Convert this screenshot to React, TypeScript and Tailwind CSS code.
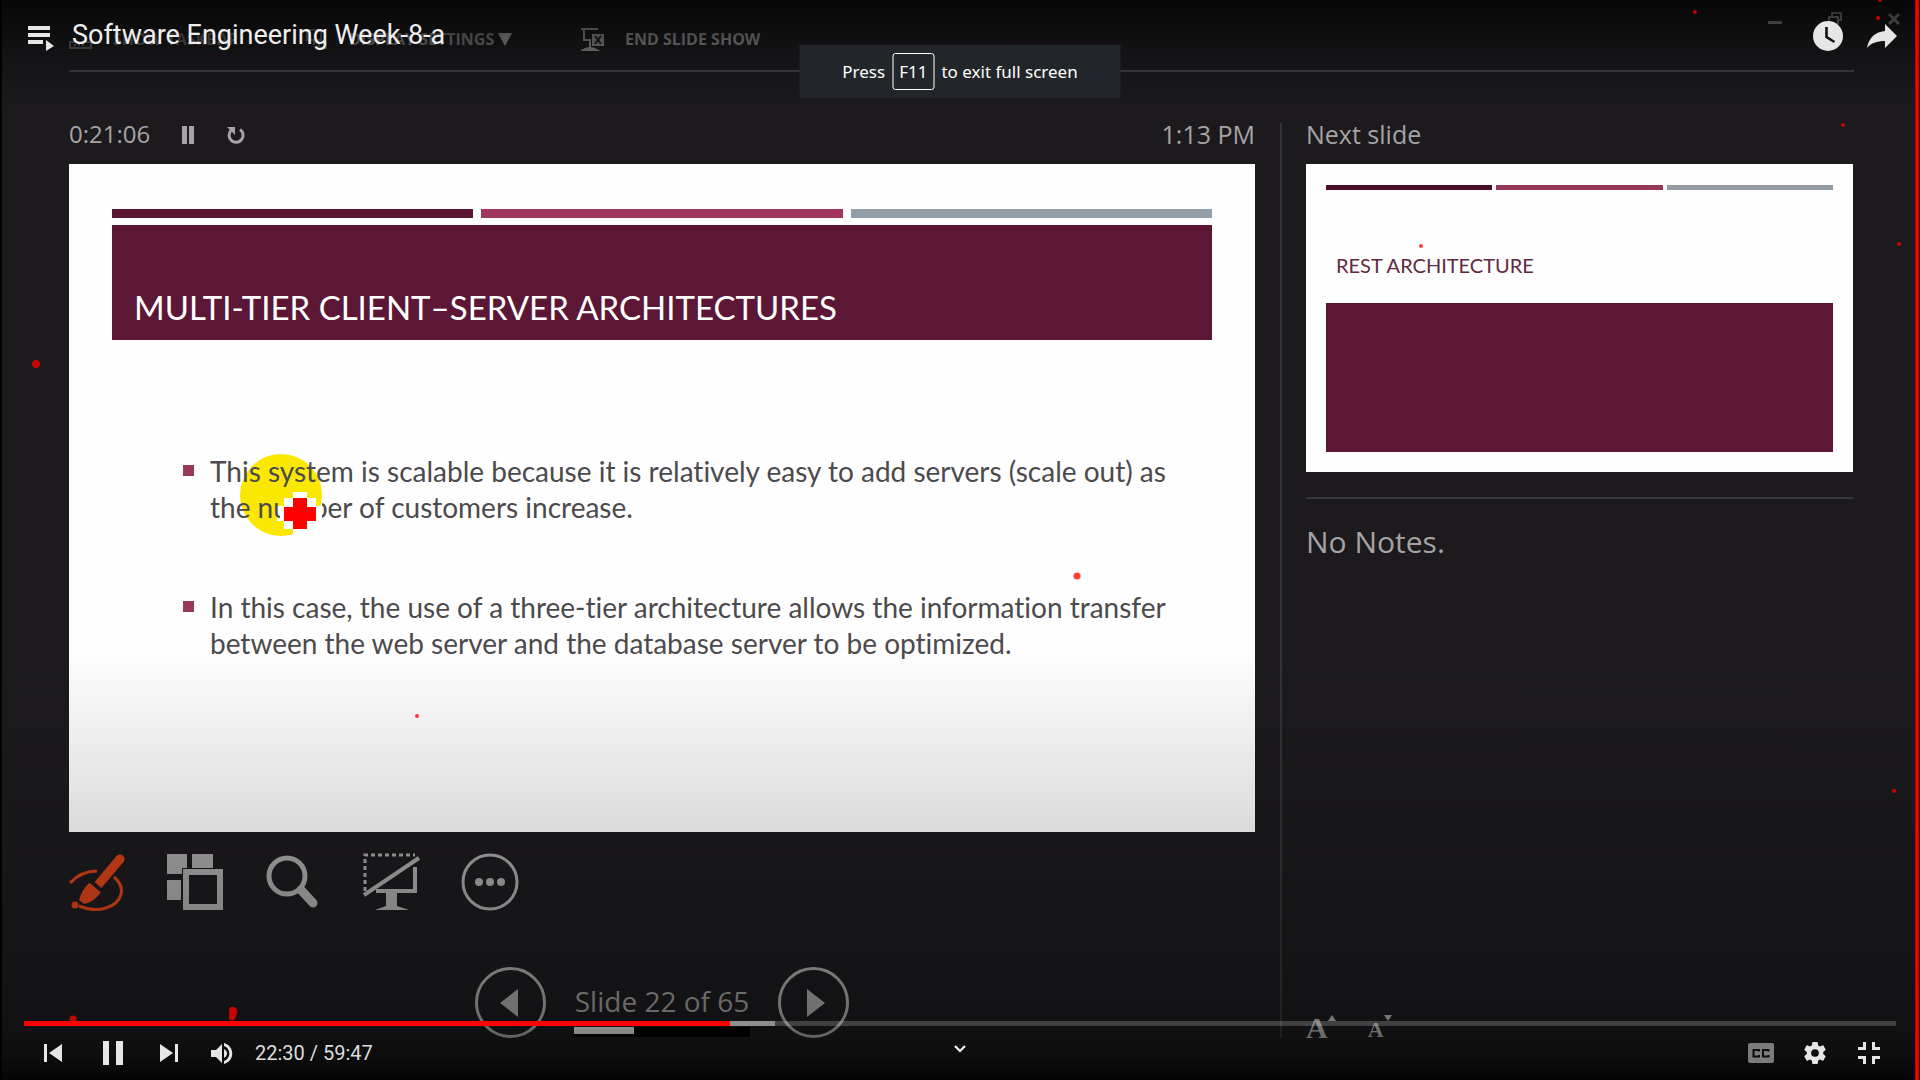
import type { ReactNode } from "react";

const inkDots = [
  { x: 1695, y: 12, r: 2 },
  { x: 1880, y: 0, r: 2 },
  { x: 1878, y: 18, r: 2 },
  { x: 1843, y: 125, r: 2 },
  { x: 1421, y: 246, r: 2 },
  { x: 1899, y: 244, r: 2 },
  { x: 36, y: 364, r: 4 },
  { x: 1077, y: 576, r: 3.5 },
  { x: 417, y: 716, r: 2 },
  { x: 1894, y: 791, r: 2 },
  { x: 73, y: 1019, r: 3.5 },
];

function IconButton({ label, className = "", children }: { label: string; className?: string; children: ReactNode }) {
  return (
    <button type="button" aria-label={label} className={`flex shrink-0 items-center justify-center ${className}`}>
      {children}
    </button>
  );
}

function PresenterHeader() {
  return (
    <header className="flex h-[70px] items-start pt-[27px] pr-5 pl-[69px] font-['Open_Sans',sans-serif] text-[16px] leading-6 font-bold text-[#8f8f8f]">
      <button type="button" className="flex w-[236px] shrink-0 items-center gap-5 text-[#5c5c5c]">
        <svg viewBox="0 0 24 22" className="h-[22px] w-6" fill="none" stroke="currentColor" strokeWidth="2">
          <path d="M1 14h21v6H1zM5 17h2M9 17h2M13 17h2" />
        </svg>
        SHOW TASKBAR
      </button>
      <button type="button" className="flex w-[276px] shrink-0 items-center gap-5 whitespace-nowrap text-[#7c7c7c]">
        <svg viewBox="0 0 24 24" className="size-6" fill="none" stroke="#5c5c5c" strokeWidth="2">
          <path d="M2 3h14v10H2zM9 13v5M14 16h7v5h-7z" />
        </svg>
        <span className="flex items-center gap-1">
          DISPLAY SETTINGS
          <svg viewBox="0 0 14 13" className="h-[13px] w-[14px]" fill="#989898">
            <path d="M0 0h14L7 13z" />
          </svg>
        </span>
      </button>
      <button type="button" className="flex items-center gap-5 whitespace-nowrap">
        <svg viewBox="0 0 24 24" className="size-6" fill="none" stroke="currentColor" strokeWidth="2">
          <path d="M0 2h17M3 2v11h7M9 13v8" />
          <path d="M2 23q7-4 14 0z" fill="currentColor" />
          <path d="M11 7h12v12H11z" fill="currentColor" stroke="none" />
          <path d="M14 9l6 8M20 9l-6 8" stroke="#1c1a1d" />
        </svg>
        END SLIDE SHOW
      </button>
      <div className="-mt-4 ml-auto flex items-center gap-[46px] text-[#8c8c8c]">
        <IconButton label="Minimize">
          <svg viewBox="0 0 14 16" className="h-4 w-[14px]" fill="currentColor">
            <path d="M0 10h14v3H0z" />
          </svg>
        </IconButton>
        <IconButton label="Restore">
          <svg viewBox="0 0 14 16" className="h-4 w-[14px]" fill="none" stroke="currentColor" strokeWidth="2">
            <path d="M4 5V2h9v7h-3M1 6h9v7H1z" />
          </svg>
        </IconButton>
        <IconButton label="Close">
          <svg viewBox="0 0 12 16" className="h-4 w-3" stroke="currentColor" strokeWidth="3">
            <path d="M1 3l10 10M11 3L1 13" />
          </svg>
        </IconButton>
      </div>
    </header>
  );
}

function Pointer() {
  return (
    <svg viewBox="0 0 90 90" className="absolute top-[289px] left-[171px] size-[90px]" aria-hidden="true">
      <circle cx="41" cy="42" r="41" fill="#fbe800" />
      <path d="M53 39h14v6h9v8h6v15h-6v8h-9v9H53v-9h-9v-8h-7V53h7v-8h9z" fill="#fff" />
      <path d="M53 45h14v9h9v14h-9v8H53v-8h-9V54h9z" fill="#f00" />
    </svg>
  );
}

function CurrentSlide() {
  return (
    <section className="relative aspect-[1186/668] bg-[#fefefe] px-[43px] pt-[45px]">
      <div className="grid h-[9px] grid-cols-3 gap-2">
        <div className="bg-[#5b1735]" />
        <div className="bg-[#a1375f]" />
        <div className="bg-[#929ea8]" />
      </div>
      <div className="mt-[7px] flex h-[115px] items-end bg-[#5b1735] px-[22px] pb-[11px]">
        <h1 className="font-['Lato',sans-serif] text-[33px] leading-[44px] whitespace-nowrap text-white">
          MULTI-TIER CLIENT–SERVER ARCHITECTURES
        </h1>
      </div>
      <Pointer />
      <ul className="relative mt-[113px] flex flex-col gap-16 pl-[71px] font-['Lato',sans-serif] text-[28px] leading-9 whitespace-nowrap text-[#4c4a4d] [font-variant-ligatures:none]">
        <li className="flex gap-4">
          <span className="mt-3 size-[11px] shrink-0 bg-[#96385a]" />
          <p className="[clip-path:polygon(0_0,100%_0,100%_100%,112px_100%,112px_44px,70px_44px,70px_100%,0_100%)]">
            This system is scalable because it is relatively easy to add servers (scale out) as
            <br />
            the number of customers increase.
          </p>
        </li>
        <li className="flex gap-4">
          <span className="mt-3 size-[11px] shrink-0 bg-[#96385a]" />
          <p>
            In this case, the use of a three-tier architecture allows the information transfer
            <br />
            between the web server and the database server to be optimized.
          </p>
        </li>
      </ul>
    </section>
  );
}

function SlideTools() {
  return (
    <div className="mt-[21px] flex gap-[41px] text-[#a9a7a9]">
      <IconButton label="Pen and laser pointer tools">
        <svg viewBox="0 0 57 58" className="h-[58px] w-[57px]" fill="none" stroke="#d8421a" strokeWidth="3">
          <path d="M1 30Q12 18 28 18M45 24C58 35 53 50 37 55Q24 59 10 53" />
          <path d="M29 32L51 6" strokeWidth="9" />
          <circle cx="51" cy="6" r="4.500" fill="#d8421a" stroke="none" />
          <path d="M21 29l11 10c-5 7-9 10-17 12l-5-4c3-9 5-12 11-18z" fill="#d8421a" stroke="none" />
          <path d="M20 28l13 11" stroke="#1c1a1d" strokeWidth="2" />
          <circle cx="6" cy="52" r="3.500" fill="#d8421a" stroke="none" />
        </svg>
      </IconButton>
      <IconButton label="See all slides">
        <svg viewBox="0 0 56 58" className="h-[58px] w-14" fill="currentColor">
          <path d="M0 1h20v20H0zM25 1h21v14H25zM0 27h14v20H0z" />
          <path d="M15 15h42v43H15z" fill="#1c1a1d" />
          <path fillRule="evenodd" d="M16 16h40v41H16zM22 22v29h28V22z" />
        </svg>
      </IconButton>
      <IconButton label="Zoom into the slide">
        <svg viewBox="0 0 58 58" className="size-[58px]" fill="none" stroke="currentColor">
          <circle cx="23" cy="23" r="18" strokeWidth="5" />
          <path d="M37 37l12 13" strokeWidth="9" strokeLinecap="round" />
        </svg>
      </IconButton>
      <IconButton label="Black or unblack slide show">
        <svg viewBox="0 0 57 58" className="h-[58px] w-[57px]" fill="none" stroke="currentColor" strokeWidth="3">
          <path d="M2 38V2h50" strokeDasharray="4 3" />
          <path d="M1 42L56 5M52 14v24H13" strokeWidth="4" />
          <path d="M23 38h11v15l12 4H12l11-4z" fill="currentColor" stroke="none" />
        </svg>
      </IconButton>
      <IconButton label="More slide show options">
        <svg viewBox="0 0 58 58" className="size-[58px]" fill="none" stroke="currentColor" strokeWidth="3">
          <circle cx="29" cy="29" r="27" />
          <g fill="currentColor" stroke="none">
            <circle cx="18" cy="29" r="4" />
            <circle cx="29" cy="29" r="4" />
            <circle cx="40" cy="29" r="4" />
          </g>
        </svg>
      </IconButton>
    </div>
  );
}

function SlideNavigation() {
  return (
    <nav className="mt-14 flex items-start justify-center gap-7 text-[#a8a8a8]">
      <IconButton label="Previous slide" className="size-[71px] rounded-full border-[3px] border-current">
        <svg viewBox="0 0 18 28" className="mr-1 h-7 w-[18px]" fill="currentColor">
          <path d="M18 0v28L0 14z" />
        </svg>
      </IconButton>
      <div className="flex w-[176px] flex-col items-center">
        <p className="mt-4 text-[28px] leading-9 whitespace-nowrap text-[#9c9c9c]">Slide 22 of 65</p>
        <div className="mt-2 h-[10px] w-full bg-black">
          <div className="h-[7px] w-[34%] bg-[#e0e0e0]" />
        </div>
      </div>
      <IconButton label="Next slide" className="size-[71px] rounded-full border-[3px] border-current">
        <svg viewBox="0 0 18 28" className="ml-1 h-7 w-[18px]" fill="currentColor">
          <path d="M0 0v28l18-14z" />
        </svg>
      </IconButton>
    </nav>
  );
}

function NextSlidePanel() {
  return (
    <aside className="flex flex-col border-l-2 border-[#333234] pl-6">
      <h2 className="h-[41px] text-[25px] leading-[22px]">Next slide</h2>
      <div className="flex aspect-[547/308] flex-col bg-[#fefefe] px-5 pt-[21px] pb-5">
        <div className="grid h-[5px] shrink-0 grid-cols-3 gap-1">
          <div className="bg-[#4a0e28]" />
          <div className="bg-[#96385a]" />
          <div className="bg-[#959ba3]" />
        </div>
        <p className="mt-[59px] pl-[10px] font-['Lato',sans-serif] text-[20px] leading-8 whitespace-nowrap text-[#5f2a40]">
          REST ARCHITECTURE
        </p>
        <div className="mt-[22px] flex-1 bg-[#5b1735]" />
      </div>
      <div className="mt-[25px] h-[2px] bg-[#38373a]" />
      <p className="mt-[25px] text-[30px] leading-9">No Notes.</p>
      <div className="mt-auto flex items-end gap-8 text-[#b4b4b4]">
        <button type="button" aria-label="Make the text larger" className="flex h-7 items-start font-['Liberation_Serif',serif] text-[30px] leading-9 font-bold">
          A
          <svg viewBox="0 0 8 6" className="mt-[5px] h-[6px] w-2" fill="currentColor">
            <path d="M0 6h8L4 0z" />
          </svg>
        </button>
        <button type="button" aria-label="Make the text smaller" className="flex h-7 items-start font-['Liberation_Serif',serif] text-[22px] leading-10 font-bold">
          A
          <svg viewBox="0 0 8 6" className="mt-[5px] h-[6px] w-2" fill="currentColor">
            <path d="M0 0h8L4 6z" />
          </svg>
        </button>
      </div>
    </aside>
  );
}

function PresenterView() {
  return (
    <div className="flex min-h-screen flex-col pb-[42px] font-['Open_Sans',sans-serif] text-[#a5a3a6]">
      <PresenterHeader />
      <div className="mr-[66px] ml-[69px] h-[2px] bg-[#424144]" />
      <main className="mt-[51px] mr-[67px] ml-[69px] grid flex-1 grid-cols-[1186fr_573fr] gap-x-[25px]">
        <div className="flex min-w-0 flex-col">
          <div className="flex h-[41px] items-start text-[25px] leading-[22px]">
            <time className="text-[24px]">0:21:06</time>
            <IconButton label="Pause the timer" className="ml-8 h-6">
              <svg viewBox="0 0 12 20" className="h-5 w-3" fill="currentColor">
                <path d="M0 1h5v18H0zM7 1h5v18H7z" />
              </svg>
            </IconButton>
            <IconButton label="Restart the timer" className="ml-[32px] h-6">
              <svg viewBox="0 0 20 20" className="size-5" fill="none" stroke="currentColor" strokeWidth="3">
                <path d="M14 4.500a7 7 0 1 1-9 1" />
                <path d="M1 2h8v8z" fill="currentColor" stroke="none" />
              </svg>
            </IconButton>
            <time className="ml-auto">1:13 PM</time>
          </div>
          <CurrentSlide />
          <SlideTools />
          <SlideNavigation />
        </div>
        <NextSlidePanel />
      </main>
    </div>
  );
}

function InkMarks() {
  return (
    <svg viewBox="0 0 1920 1080" className="pointer-events-none absolute inset-0 size-full" aria-hidden="true">
      <g fill="#ff0000" fillOpacity="0.76">
        {inkDots.map((d) => (
          <circle key={`${d.x}-${d.y}`} cx={d.x} cy={d.y} r={d.r} />
        ))}
        <path d="M229 1010q1-4 5-3 4 1 3 6l-2 6q-3 3-6 0z" />
      </g>
      <path d="M1915 0h4v1080h-4z" fill="#c00000" />
      <path d="M1916 0h2v1080h-2z" fill="#ff0000" />
    </svg>
  );
}

function FullscreenHint() {
  return (
    <div className="absolute top-[45px] left-1/2 flex h-[53px] w-[321px] -translate-x-1/2 items-center justify-center gap-[7px] bg-[#22262b] font-['Noto_Sans',sans-serif] text-[17px] whitespace-nowrap text-white">
      <span>Press</span>
      <kbd className="flex h-[37px] items-center rounded-[3px] border border-white px-[6px] font-['Noto_Sans',sans-serif]">F11</kbd>
      <span>to exit full screen</span>
    </div>
  );
}

function PlayerTop() {
  return (
    <div className="absolute inset-x-0 top-0 flex h-[72px] items-center pr-[23px] pl-7 text-[#eeeeee]">
      <IconButton label="Playlist">
        <svg viewBox="0 0 26 26" className="mt-1 size-[26px]" fill="#e6e6e6">
          <path d="M0 1h22v4H0zM0 8h22v4H0zM0 15h15v4H0zM18 15v11l8-5z" />
        </svg>
      </IconButton>
      <a href="#video" className="mb-[2px] ml-[18px] font-['Roboto',sans-serif] text-[27px] leading-8 whitespace-nowrap">
        Software Engineering Week-8-a
      </a>
      <div className="ml-auto flex items-center gap-6">
        <IconButton label="Watch later">
          <svg viewBox="0 0 30 30" className="size-[30px]" fill="#e6e6e6">
            <circle cx="15" cy="15" r="15" />
            <path d="M13.500 6v10l8 5" fill="none" stroke="#111" strokeWidth="2.600" />
          </svg>
        </IconButton>
        <IconButton label="Share">
          <svg viewBox="0 0 30 24" className="h-6 w-[30px]" fill="#e6e6e6">
            <path d="M18 0l12 12-12 12v-7C10 17 4 19 0 24 1.500 15 7 8 18 7z" />
          </svg>
        </IconButton>
      </div>
    </div>
  );
}

function PlayerBottom() {
  return (
    <div className="absolute inset-x-0 bottom-0 px-6 text-[#e6e6e6]">
      <input
        type="range"
        aria-label="Seek"
        min={0}
        max={3587}
        defaultValue={1350}
        className="block h-[5px] w-full appearance-none bg-[linear-gradient(to_right,#ff0000_37.7%,#8e8e8e_37.7%,#8e8e8e_40.1%,rgba(255,255,255,0.2)_40.1%)] [&::-webkit-slider-thumb]:size-0 [&::-webkit-slider-thumb]:appearance-none"
      />
      <div className="grid h-[54px] grid-cols-[1fr_auto_1fr] items-center">
        <div className="flex items-center pl-5">
          <IconButton label="Previous video">
            <svg viewBox="0 0 18 18" className="size-[18px]" fill="currentColor">
              <path d="M0 0h3v18H0zM18 0v18L5 9z" />
            </svg>
          </IconButton>
          <IconButton label="Pause" className="ml-[41px]">
            <svg viewBox="0 0 20 24" className="h-6 w-5" fill="currentColor">
              <path d="M0 0h6v24H0zM13 0h7v24h-7z" />
            </svg>
          </IconButton>
          <IconButton label="Next video" className="ml-[37px]">
            <svg viewBox="0 0 18 18" className="size-[18px]" fill="currentColor">
              <path d="M15 0h3v18h-3zM0 0v18l13-9z" />
            </svg>
          </IconButton>
          <IconButton label="Mute" className="ml-[33px]">
            <svg viewBox="0 0 22 21" className="h-[21px] w-[22px]" fill="currentColor">
              <path d="M0 7v7h5l6 6V1L5 7zM13 6v9c4-2 4-7 0-9z" />
              <path d="M13 0v3c7 2 7 13 0 15v3c11-3 11-18 0-21z" />
            </svg>
          </IconButton>
          <span className="ml-[22px] font-['Roboto',sans-serif] text-[20px] leading-6 text-[#dddddd]">22:30 / 59:47</span>
        </div>
        <IconButton label="Scroll for details" className="mb-2">
          <svg viewBox="0 0 12 8" className="h-2 w-3" fill="none" stroke="#fff" strokeWidth="2">
            <path d="M1 1l5 5 5-5" />
          </svg>
        </IconButton>
        <div className="flex items-center justify-end pr-4">
          <IconButton label="Subtitles">
            <svg viewBox="0 0 26 20" className="h-5 w-[26px]">
              <rect width="26" height="20" rx="2" fill="#7c7c7c" />
              <path d="M11 8.500V7H5.500v6.500H11V12M20.500 8.500V7H15v6.500h5.500V12" fill="none" stroke="#0d0d0d" strokeWidth="2" />
            </svg>
          </IconButton>
          <IconButton label="Settings" className="ml-[30px]">
            <svg viewBox="2 2 20 20" className="size-[22px]" fill="currentColor">
              <path d="M19.430 12.980c.04-.32.07-.64.07-.98s-.03-.66-.07-.98l2.110-1.650c.19-.15.24-.42.12-.64l-2-3.460c-.12-.22-.39-.3-.61-.22l-2.490 1c-.52-.4-1.080-.73-1.690-.98l-.38-2.650C14.460 2.180 14.250 2 14 2h-4c-.25 0-.46.18-.49.42l-.38 2.650c-.61.25-1.170.59-1.690.98l-2.490-1c-.23-.09-.49 0-.61.22l-2 3.460c-.13.22-.07.49.12.64l2.110 1.650c-.04.32-.07.65-.07.98s.03.66.07.98l-2.110 1.650c-.19.15-.24.42-.12.64l2 3.460c.12.22.39.3.61.22l2.490-1c.52.4 1.080.73 1.690.98l.38 2.650c.03.24.24.42.49.42h4c.25 0 .46-.18.49-.42l.38-2.650c.61-.25 1.170-.59 1.690-.98l2.490 1c.23.09.49 0 .61-.22l2-3.460c.12-.22.07-.49-.12-.64zM12 15.500a3.500 3.500 0 1 1 0-7 3.500 3.500 0 0 1 0 7z" />
            </svg>
          </IconButton>
          <IconButton label="Exit full screen" className="ml-8">
            <svg viewBox="0 0 22 22" className="size-[22px]" fill="currentColor">
              <path d="M5 0h3v8H0V5h5zM14 0h3v5h5v3h-8zM0 14h8v8H5v-5H0zM14 14h8v3h-5v5h-3z" />
            </svg>
          </IconButton>
        </div>
      </div>
    </div>
  );
}

export default function App() {
  return (
    <div className="relative min-h-screen overflow-hidden bg-[#1c1a1d]">
      <PresenterView />
      <div className="pointer-events-none absolute inset-x-0 top-0 h-[120px] bg-[linear-gradient(to_bottom,rgba(0,0,0,0.72),rgba(0,0,0,0.45)_30%,rgba(0,0,0,0.25)_55%,rgba(0,0,0,0.1)_75%,transparent)]" />
      <div className="pointer-events-none absolute inset-x-0 bottom-0 h-[430px] bg-[linear-gradient(to_bottom,transparent,rgba(0,0,0,0.14)_43%,rgba(0,0,0,0.25)_70%,rgba(0,0,0,0.36)_87%,rgba(0,0,0,0.5)_94%,rgba(0,0,0,0.8))]" />
      <div className="pointer-events-none absolute inset-y-0 left-0 w-[2px] bg-black" />
      <InkMarks />
      <FullscreenHint />
      <PlayerTop />
      <PlayerBottom />
    </div>
  );
}
